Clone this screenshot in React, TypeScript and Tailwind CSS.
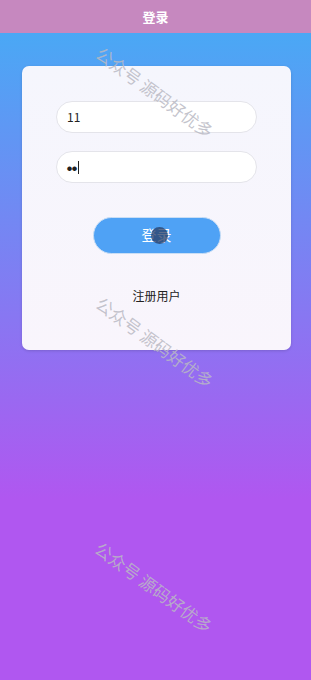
import React from 'react'

const font = { fontFamily: '"Noto Sans CJK SC", "Noto Sans", sans-serif' }

function Watermark({ pos }: { pos: string }) {
  return (
    <span
      className={`absolute -translate-x-1/2 -translate-y-1/2 rotate-[36deg] whitespace-nowrap text-[17px] text-[rgba(185,185,195,0.85)] ${pos}`}
    >
      公众号 源码好优多
    </span>
  )
}

export default function App() {
  return (
    <div className="relative flex min-h-[680px] w-full flex-col overflow-hidden" style={font}>
      <header className="flex h-[33px] items-center justify-center bg-[#c688bf]">
        <h1 className="text-[13px] font-bold text-white">登录</h1>
      </header>

      <main className="flex flex-1 flex-col bg-[linear-gradient(180deg,#4aa8f5_0%,#b057f0_72%,#b057f0_100%)] pl-[22px] pr-[20px] pt-[33px]">
        <div className="flex h-[284px] flex-col items-center rounded-[7px] bg-[linear-gradient(180deg,#f5f6fd,#f9f5fc)] pt-[35px] shadow-[0_1px_3px_rgba(0,0,0,0.15)]">
          <div className="flex h-[32px] w-[201px] items-center rounded-full border border-[#e4e4ea] bg-white px-[10px] text-[12px] text-[#222]">
            11
          </div>
          <div className="mt-[18px] flex h-[32px] w-[201px] items-center rounded-full border border-[#e4e4ea] bg-white px-[10px] text-[#222]">
            <span className="text-[5px] leading-none">●●</span>
            <span className="ml-[1px] h-[13px] w-[1px] bg-[#222]" />
          </div>

          <button className="relative mt-[34px] flex h-[37px] w-[128px] items-center justify-center rounded-full border border-[#c9def5] bg-[#4fa2f5] text-[15px] text-white">
            登录
            <span className="absolute left-[57px] top-[9px] size-[17px] rounded-full bg-[rgba(40,60,100,0.75)]" />
          </button>

          <p className="mt-[33px] text-[12px] text-[#222]">注册用户</p>
        </div>
      </main>

      <div className="pointer-events-none absolute inset-0">
        <Watermark pos="left-[155px] top-[92px]" />
        <Watermark pos="left-[155px] top-[342px]" />
        <Watermark pos="left-[154px] top-[587px]" />
      </div>
    </div>
  )
}
